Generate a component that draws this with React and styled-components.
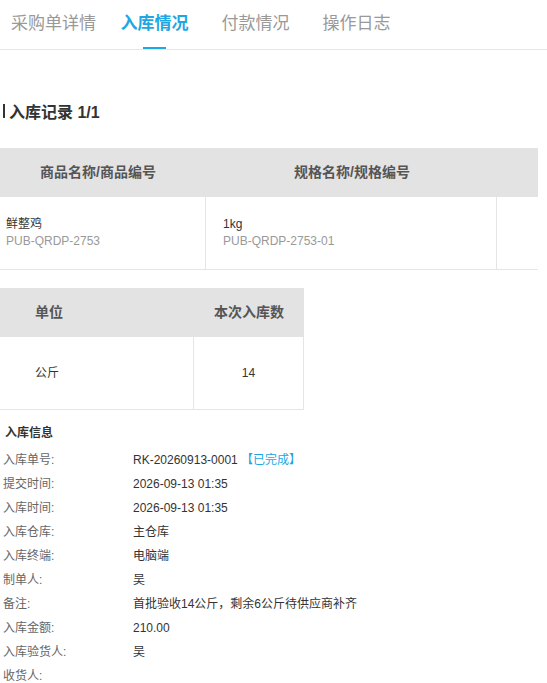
import React from "react";
import styled, { createGlobalStyle } from "styled-components";

// styles
const GlobalStyle = createGlobalStyle`
  html {
    overflow: hidden;
  }
  body {
    margin: 0;
    background: #fff;
    font-family: "Liberation Sans", "Noto Sans CJK SC", sans-serif;
    color: #333;
  }
`;

const PageStyle = styled.div`
  width: 547px;
`;

const TabBarStyle = styled.div`
  display: flex;
  padding-left: 3px;
  border-bottom: 1px solid #e6e6e6;
`;

const TabStyle = styled.div`
  width: 101px;
  display: flex;
  flex-direction: column;
  align-items: center;
  font-size: 17px;
  font-weight: ${(p) => (p.active ? "bold" : "normal")};
  color: ${(p) => (p.active ? "#1ea7e4" : "#999")};
  span {
    line-height: 47px;
    height: 47px;
  }
  i {
    width: 23px;
    height: 2px;
    background: ${(p) => (p.active ? "#1ea7e4" : "transparent")};
  }
`;

const HeadingStyle = styled.div`
  display: flex;
  align-items: center;
  gap: 4px;
  height: 20px;
  margin: 51px 0 0 3px;
  font-size: 16px;
  font-weight: bold;
  color: #333;
  &::before {
    content: "";
    width: 2px;
    height: 14px;
    background: #333;
  }
`;

const TableStyle = styled.div`
  display: grid;
  grid-template-columns: ${(p) => p.cols};
  width: ${(p) => p.width}px;
  margin-top: ${(p) => p.top}px;
`;

const HeadCell = styled.div`
  height: 49px;
  line-height: 49px;
  background: #e3e3e3;
  font-size: 14px;
  font-weight: bold;
  color: #555;
  white-space: nowrap;
  text-align: ${(p) => (p.center ? "center" : "left")};
  padding-left: ${(p) => p.pad || 0}px;
`;

const BodyCell = styled.div`
  height: 72px;
  display: flex;
  flex-direction: column;
  justify-content: center;
  align-items: ${(p) => (p.center ? "center" : "flex-start")};
  padding-left: ${(p) => p.pad || 0}px;
  border-bottom: 1px solid #e5e5e5;
  border-right: ${(p) => (p.divider ? "1px solid #e5e5e5" : "none")};
  font-size: 12px;
  line-height: 17px;
  color: #333;
  white-space: nowrap;
`;

const CodeText = styled.div`
  color: #999;
`;

const InfoTitle = styled.div`
  margin: 11px 0 0 5px;
  line-height: 24px;
  font-size: 12px;
  font-weight: bold;
  color: #333;
`;

const InfoList = styled.div`
  margin-top: 3px;
  padding-left: 3px;
`;

const InfoRow = styled.div`
  display: grid;
  grid-template-columns: 130px 1fr;
  height: 24px;
  line-height: 24px;
  font-size: 12px;
`;

const LabelStyle = styled.span`
  color: #666;
`;

const ValueStyle = styled.span`
  color: #333;
`;

const StatusStyle = styled.span`
  color: #1ea7e4;
`;

// data
const TABS = ["采购单详情", "入库情况", "付款情况", "操作日志"];
const INFO = [
  ["入库单号:", "RK-20260913-0001", "【已完成】"],
  ["提交时间:", "2026-09-13 01:35"],
  ["入库时间:", "2026-09-13 01:35"],
  ["入库仓库:", "主仓库"],
  ["入库终端:", "电脑端"],
  ["制单人:", "吴"],
  ["备注:", "首批验收14公斤，剩余6公斤待供应商补齐"],
  ["入库金额:", "210.00"],
  ["入库验货人:", "吴"],
  ["收货人:", ""],
];

const App = () => {
  return (
    <PageStyle>
      <GlobalStyle />
      <TabBarStyle>
        {TABS.map((tab, index) => (
          <TabStyle key={index} active={index === 1}>
            <span>{tab}</span>
            <i />
          </TabStyle>
        ))}
      </TabBarStyle>

      <HeadingStyle>入库记录 1/1</HeadingStyle>

      <TableStyle cols="206px 291px 41px" width={538} top={27}>
        <HeadCell pad={40}>商品名称/商品编号</HeadCell>
        <HeadCell pad={88}>规格名称/规格编号</HeadCell>
        <HeadCell />
        <BodyCell pad={6} divider>
          <div>鲜整鸡</div>
          <CodeText>PUB-QRDP-2753</CodeText>
        </BodyCell>
        <BodyCell pad={17} divider>
          <div>1kg</div>
          <CodeText>PUB-QRDP-2753-01</CodeText>
        </BodyCell>
        <BodyCell />
      </TableStyle>

      <TableStyle cols="194px 110px" width={304} top={18}>
        <HeadCell pad={35}>单位</HeadCell>
        <HeadCell center>本次入库数</HeadCell>
        <BodyCell pad={35} divider>公斤</BodyCell>
        <BodyCell center divider>14</BodyCell>
      </TableStyle>

      <InfoTitle>入库信息</InfoTitle>
      <InfoList>
        {INFO.map(([label, value, status], index) => (
          <InfoRow key={index}>
            <LabelStyle>{label}</LabelStyle>
            <ValueStyle>
              {value}
              {status && <StatusStyle> {status}</StatusStyle>}
            </ValueStyle>
          </InfoRow>
        ))}
      </InfoList>
    </PageStyle>
  );
};

export default App;
